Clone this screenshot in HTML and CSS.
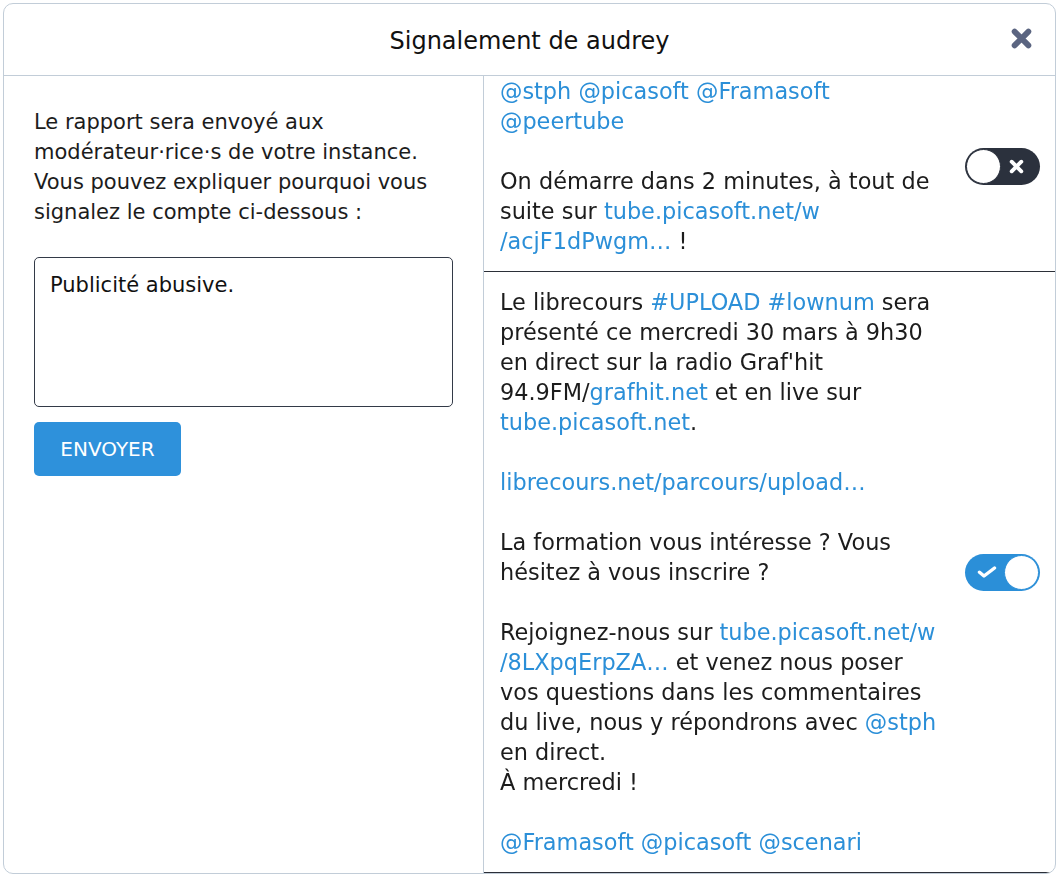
FILE: index.html
```html
<!DOCTYPE html>
<html lang="fr">
<head>
    <meta charset="UTF-8">
    <meta name="viewport" content="width=device-width, initial-scale=1.0">
    <title>Signalement de audrey</title>
    <link rel="stylesheet" href="styles.css">
</head>
<body>

    <div class="dialog">
        <header class="dialog-header">
            <h1>Signalement de audrey</h1>
            <button class="close-button" aria-label="Fermer">
                <svg viewBox="0 0 20 20" width="23" height="23">
                    <path d="M4 4 L16 16 M16 4 L4 16" stroke="currentColor" stroke-width="5" stroke-linecap="round"/>
                </svg>
            </button>
        </header>

        <div class="dialog-body">
            <!-- formulaire -->
            <div class="report-form">
                <p>Le rapport sera envoyé aux modérateur·rice·s de votre instance. Vous pouvez expliquer pourquoi vous signalez le compte ci-dessous :</p>
                <textarea class="report-comment" id="reportComment">Publicité abusive.</textarea>
                <button class="send-button">ENVOYER</button>
            </div>

            <!-- statuts du compte -->
            <div class="status-list">
                <div class="status-scroll">
                    <article class="status">
                        <div class="status-text">
                            <p><a href="#">@stph</a> <a href="#">@picasoft</a> <a href="#">@Framasoft</a><br><a href="#">@peertube</a></p>
                            <p>On démarre dans 2 minutes, à tout de<br>suite sur <a href="#">tube.picasoft.net/w<br>/acjF1dPwgm…</a> !</p>
                        </div>
                        <span class="toggle">
                            <span class="knob"></span>
                            <svg class="toggle-icon" viewBox="0 0 14 14" width="15" height="15">
                                <path d="M2.5 2.5 L11.5 11.5 M11.5 2.5 L2.5 11.5" stroke="#fff" stroke-width="3.6" stroke-linecap="round"/>
                            </svg>
                        </span>
                    </article>

                    <article class="status">
                        <div class="status-text">
                            <p>Le librecours <a href="#">#UPLOAD</a> <a href="#">#lownum</a> sera<br>présenté ce mercredi 30 mars à 9h30<br>en direct sur la radio Graf'hit<br>94.9FM/<a href="#">grafhit.net</a> et en live sur<br><a href="#">tube.picasoft.net</a>.</p>
                            <p><a href="#">librecours.net/parcours/upload…</a></p>
                            <p>La formation vous intéresse ? Vous<br>hésitez à vous inscrire ?</p>
                            <p>Rejoignez-nous sur <a href="#">tube.picasoft.net/w<br>/8LXpqErpZA…</a> et venez nous poser<br>vos questions dans les commentaires<br>du live, nous y répondrons avec <a href="#">@stph</a><br>en direct.<br>À mercredi !</p>
                            <p><a href="#">@Framasoft</a> <a href="#">@picasoft</a> <a href="#">@scenari</a></p>
                        </div>
                        <span class="toggle checked">
                            <svg class="toggle-icon" viewBox="0 0 20 12" width="20" height="12">
                                <path d="M2.5 6.2 L7 10 L17.5 2" fill="none" stroke="#fff" stroke-width="3.4" stroke-linecap="round" stroke-linejoin="round"/>
                            </svg>
                            <span class="knob"></span>
                        </span>
                    </article>
                </div>
            </div>
        </div>
    </div>

    <script src="script.js"></script>
</body>
</html>
```

FILE: styles.css
```css
body {
    margin: 0;
    background: #fff;
    font-family: "DejaVu Sans", sans-serif;
    color: #1c1c1c;
}
a {
    color: #2b8fd8;
    text-decoration: none;
}
.dialog {
    margin: 3px 3px 0 3px;
    width: 1051px;
    height: 869px;
    border: 1px solid #c2cdd8;
    border-radius: 10px;
    background: #fff;
    display: flex;
    flex-direction: column;
    overflow: hidden;
}
.dialog-header {
    height: 71px;
    border-bottom: 1px solid #c2cdd8;
    display: flex;
    align-items: center;
    justify-content: center;
    position: relative;
}
.dialog-header h1 {
    margin: 2px 0 0 0;
    font-size: 24px;
    font-weight: normal;
    color: #111;
}
.close-button {
    position: absolute;
    right: 22px;
    top: 23px;
    border: none;
    background: none;
    padding: 0;
    color: #5b6581;
    cursor: pointer;
}
.dialog-body {
    flex: 1;
    display: grid;
    grid-template-columns: 480px 1fr;
    min-height: 0;
}
.report-form {
    border-right: 1px solid #c2cdd8;
    padding: 31px 30px;
    display: flex;
    flex-direction: column;
    align-items: flex-start;
}
.report-form p {
    margin: 0;
    font-size: 21px;
    line-height: 30px;
}
.report-comment {
    margin-top: 30px;
    box-sizing: border-box;
    width: 419px;
    height: 150px;
    padding: 12px 15px;
    border: 1px solid #333a48;
    border-radius: 5px;
    font-family: "DejaVu Sans", sans-serif;
    font-size: 21px;
    line-height: 30px;
    color: #111;
    caret-color: #000;
    outline: none;
    resize: none;
}
.send-button {
    margin-top: 15px;
    width: 147px;
    height: 54px;
    border: none;
    border-radius: 5px;
    background: #2e91db;
    color: #fff;
    font-family: "DejaVu Sans", sans-serif;
    font-size: 20px;
    cursor: pointer;
}
.status-list {
    overflow: hidden;
}
.status-scroll {
    margin-top: -15px;
}
.status {
    display: flex;
    align-items: center;
    padding: 15px 15px 15px 16px;
    border-bottom: 1px solid #2b2f38;
}
.status-text {
    flex: 1;
    font-size: 22.4px;
    line-height: 30px;
    white-space: nowrap;
}
.status-text p {
    margin: 0 0 30px 0;
}
.status-text p:last-child {
    margin-bottom: 0;
}
.toggle {
    width: 75px;
    height: 37px;
    box-sizing: border-box;
    border-radius: 19px;
    background: #2b313d;
    display: flex;
    align-items: center;
    justify-content: space-between;
    padding: 0 1px;
}
.toggle .toggle-icon {
    margin-right: 15px;
}
.toggle.checked {
    background: #2b8fd8;
}
.toggle.checked .toggle-icon {
    margin: 0 0 0 11px;
}
.knob {
    width: 35px;
    height: 35px;
    box-sizing: border-box;
    border-radius: 50%;
    background: #fff;
    border: 1px solid #2b313d;
}
.toggle.checked .knob {
    border-color: #2b8fd8;
}
```

FILE: script.js
```js
// caret at the end of the comment, as when typing
let comment = document.getElementById("reportComment");
comment.focus();
comment.setSelectionRange(comment.value.length, comment.value.length);
```
